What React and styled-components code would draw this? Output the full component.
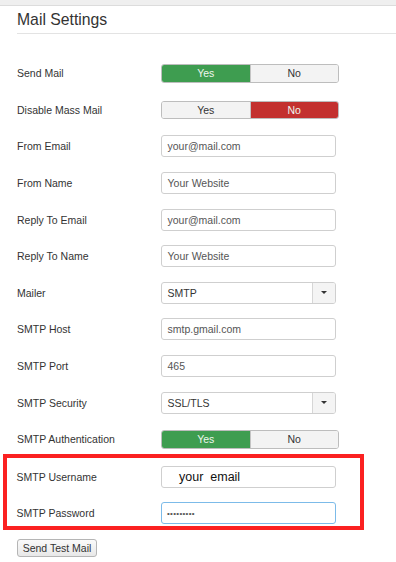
import styled, { createGlobalStyle } from 'styled-components'

const GlobalStyle = createGlobalStyle`
  body {
    margin: 0;
    background: #fff;
    font-family: "Liberation Sans", Arial, Helvetica, sans-serif;
    color: #333;
  }
`

const TopBar = styled.div`
  height: 5px;
  background: #efefef;
  border-bottom: 1px solid #dcdcdc;
`

const Page = styled.div`
  padding-left: 17px;
`

const Heading = styled.h2`
  margin: 4.5px 0 0;
  padding-bottom: 4.5px;
  font-size: 15.75px;
  font-weight: normal;
  line-height: 18px;
  color: #333;
  border-bottom: 1px solid #e3e3e3;
`

const Form = styled.div`
  margin-top: 21px;
`

const Row = styled.div`
  display: grid;
  grid-template-columns: 144px auto;
  align-items: center;
  height: 36.6px;
`

const Label = styled.div`
  font-size: 10.5px;
  color: #333;
`

const Toggle = styled.div`
  display: flex;
  width: 178px;
  height: 18.7px;
  box-sizing: border-box;
  border: 1px solid #bdbdbd;
  border-radius: 3px;
  overflow: hidden;
`

const ToggleOption = styled.div`
  flex: 1;
  display: flex;
  align-items: center;
  justify-content: center;
  font-size: 10.5px;
  color: ${(p) => (p.$active ? '#eef6ee' : '#333')};
  background: ${(p) =>
    p.$active === 'yes' ? '#3e9d50' : p.$active === 'no' ? '#c3312f' : '#f3f3f3'};
  & + & {
    border-left: 1px solid #c4c4c4;
  }
`

const Field = styled.div`
  display: flex;
  align-items: center;
  width: 175px;
  height: 22px;
  box-sizing: border-box;
  padding-left: 5.5px;
  border: 1px solid ${(p) => (p.$focus ? '#7cbbe9' : '#cfcfcf')};
  border-radius: 3px;
  background: #fff;
  font-size: 10.5px;
  color: #555;
  white-space: pre;
`

const BigValue = styled.span`
  font-size: 12.5px;
  color: #111;
  padding-left: 12px;
`

const Dots = styled.span`
  font-size: 8px;
  letter-spacing: 0.3px;
  color: #555;
`

const Select = styled.div`
  display: flex;
  width: 175px;
  height: 22px;
  box-sizing: border-box;
  border: 1px solid #cfcfcf;
  border-radius: 3px;
  overflow: hidden;
`

const SelectValue = styled.div`
  flex: 1;
  display: flex;
  align-items: center;
  padding-left: 5.5px;
  font-size: 10.5px;
  color: #333;
`

const SelectArrow = styled.div`
  width: 22px;
  display: flex;
  align-items: center;
  justify-content: center;
  background: #f4f4f4;
  border-left: 1px solid #d6d6d6;
  &::after {
    content: '';
    border-left: 3px solid transparent;
    border-right: 3px solid transparent;
    border-top: 3px solid #333;
  }
`

const Highlight = styled.div`
  height: 76px;
  width: 361px;
  box-sizing: border-box;
  margin: -3.3px 0 0 -14px;
  padding-left: 9.5px;
  border: 4.5px solid #fb2121;
`

const TestButton = styled.button`
  margin-top: 9px;
  height: 18px;
  width: 80px;
  padding: 0;
  font-family: inherit;
  font-size: 10.5px;
  color: #333;
  background: linear-gradient(#fafafa, #e8e8e8);
  border: 1px solid #b5b5b5;
  border-radius: 3px;
`

function YesNo({ value }) {
  return (
    <Toggle>
      <ToggleOption $active={value === 'yes' ? 'yes' : undefined}>Yes</ToggleOption>
      <ToggleOption $active={value === 'no' ? 'no' : undefined}>No</ToggleOption>
    </Toggle>
  )
}

function Dropdown({ value }) {
  return (
    <Select>
      <SelectValue>{value}</SelectValue>
      <SelectArrow />
    </Select>
  )
}

export default function App() {
  return (
    <>
      <GlobalStyle />
      <TopBar />
      <Page>
        <Heading>Mail Settings</Heading>
        <Form>
          <Row>
            <Label>Send Mail</Label>
            <YesNo value="yes" />
          </Row>
          <Row>
            <Label>Disable Mass Mail</Label>
            <YesNo value="no" />
          </Row>
          <Row>
            <Label>From Email</Label>
            <Field>your@mail.com</Field>
          </Row>
          <Row>
            <Label>From Name</Label>
            <Field>Your Website</Field>
          </Row>
          <Row>
            <Label>Reply To Email</Label>
            <Field>your@mail.com</Field>
          </Row>
          <Row>
            <Label>Reply To Name</Label>
            <Field>Your Website</Field>
          </Row>
          <Row>
            <Label>Mailer</Label>
            <Dropdown value="SMTP" />
          </Row>
          <Row>
            <Label>SMTP Host</Label>
            <Field>smtp.gmail.com</Field>
          </Row>
          <Row>
            <Label>SMTP Port</Label>
            <Field>465</Field>
          </Row>
          <Row>
            <Label>SMTP Security</Label>
            <Dropdown value="SSL/TLS" />
          </Row>
          <Row>
            <Label>SMTP Authentication</Label>
            <YesNo value="yes" />
          </Row>
          <Highlight>
            <Row>
              <Label>SMTP Username</Label>
              <Field>
                <BigValue>your  email</BigValue>
              </Field>
            </Row>
            <Row>
              <Label>SMTP Password</Label>
              <Field $focus>
                <Dots>•••••••••</Dots>
              </Field>
            </Row>
          </Highlight>
          <TestButton>Send Test Mail</TestButton>
        </Form>
      </Page>
    </>
  )
}
